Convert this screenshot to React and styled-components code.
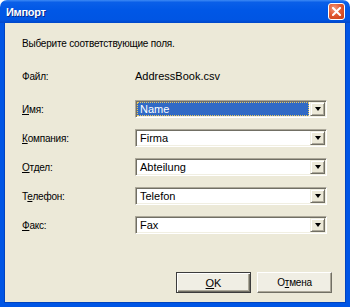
import React from 'react';
import styled, { createGlobalStyle } from 'styled-components';

const Global = createGlobalStyle`
  html, body { margin: 0; padding: 0; background: #ffffff; }
  body { font-family: "Liberation Sans", Arial, sans-serif; font-size: 11px; color: #000; }
  * { box-sizing: border-box; }
`;

const Window = styled.div`
  width: 350px;
  height: 307px;
  display: flex;
  flex-direction: column;
`;

const TitleBar = styled.div`
  height: 23px;
  flex: none;
  display: flex;
  align-items: center;
  justify-content: space-between;
  padding: 0 5px 0 6px;
  border-radius: 7px 7px 0 0;
  background: linear-gradient(to bottom, #3d8af5 0%, #0a5fe8 10%, #0057e6 45%, #0055e3 85%, #0046c8 100%);
`;

const Title = styled.span`
  color: #fff;
  font-weight: bold;
  font-size: 11px;
  letter-spacing: -0.3px;
  text-shadow: 1px 1px 0 #0a2a8a;
`;

const CloseButton = styled.div`
  width: 17px;
  height: 17px;
  border: 1px solid #fff;
  border-radius: 3px;
  background: radial-gradient(circle at 35% 30%, #f29a7c 0%, #e25a33 45%, #c53d14 100%);
  display: flex;
  align-items: center;
  justify-content: center;
`;

const Client = styled.div`
  flex: 1;
  display: flex;
  flex-direction: column;
  background: #ece9d8;
  border: 4px solid #0055e5;
  border-top: 0;
  box-shadow: inset 1px 0 0 #0043c0, inset -1px 0 0 #0043c0, inset 0 -1px 0 #0043c0;
  padding: 14px 14px 10px 18px;
`;

const Cyr = styled.span`
  font-size: 10px;
  letter-spacing: -0.2px;
`;

const Intro = styled.div`
  line-height: 13px;
  height: 13px;
  margin-bottom: 17px;
`;

const Form = styled.div`
  display: flex;
  flex-direction: column;
  gap: 11px;
`;

const Row = styled.div`
  display: flex;
  align-items: center;
  height: 18px;
  margin-bottom: ${p => (p.$spaced ? '4px' : '0')};
`;

const Label = styled.span`
  width: 113px;
  flex: none;
`;

const Combo = styled.div`
  width: 192px;
  height: 18px;
  display: flex;
  align-items: center;
  background: #fff;
  border: 1px solid;
  border-color: #aca899 #ffffff #ffffff #aca899;
  box-shadow: inset 1px 1px 0 #716f64, inset -1px -1px 0 #f1efe2;
  padding: 1px;
`;

const Value = styled.div`
  flex: 1;
  height: 14px;
  margin-right: 1px;
  padding-left: 2px;
  line-height: 12px;
  background: ${p => (p.$selected ? '#316ac5' : 'transparent')};
  color: ${p => (p.$selected ? '#fff' : '#000')};
  border: 1px ${p => (p.$selected ? 'dotted #e8c860' : 'solid transparent')};
`;

const DropButton = styled.div`
  width: 15px;
  height: 14px;
  flex: none;
  background: #ece9d8;
  border: 1px solid;
  border-color: #f1efe2 #716f64 #716f64 #f1efe2;
  box-shadow: inset 1px 1px 0 #fff, inset -1px -1px 0 #aca899;
  display: flex;
  align-items: center;
  justify-content: center;
  &::after {
    content: '';
    border-left: 3.5px solid transparent;
    border-right: 3.5px solid transparent;
    border-top: 4px solid #000;
  }
`;

const Footer = styled.div`
  margin-top: auto;
  display: flex;
  justify-content: flex-end;
  gap: 6px;
`;

const Button = styled.div`
  width: 75px;
  height: 21px;
  display: flex;
  align-items: center;
  justify-content: center;
  background: #f0eee4;
  border: 1px solid;
  border-color: ${p => (p.$default ? '#3c3c3c' : '#ffffff #716f64 #716f64 #ffffff')};
  box-shadow: ${p => (p.$default
    ? 'inset 1px 1px 0 #fff, inset -1px -1px 0 #716f64, inset -2px -2px 0 #aca899'
    : 'inset -1px -1px 0 #aca899')};
`;

const fields = [
  { key: 'И', rest: 'мя:', value: 'Name', selected: true },
  { key: 'К', rest: 'омпания:', value: 'Firma' },
  { key: 'О', rest: 'тдел:', value: 'Abteilung' },
  { pre: 'Т', key: 'е', rest: 'лефон:', value: 'Telefon' },
  { key: 'Ф', rest: 'акс:', value: 'Fax' },
];

export default function App() {
  return (
    <>
      <Global />
      <Window>
        <TitleBar>
          <Title>Импорт</Title>
          <CloseButton>
            <svg width="9" height="9" viewBox="0 0 9 9">
              <path d="M1 1 L8 8 M8 1 L1 8" stroke="#fff" strokeWidth="2" strokeLinecap="square" />
            </svg>
          </CloseButton>
        </TitleBar>
        <Client>
          <Intro><Cyr>Выберите соответствующие поля.</Cyr></Intro>
          <Form>
            <Row $spaced>
              <Label><Cyr>Файл:</Cyr></Label>
              <span>AddressBook.csv</span>
            </Row>
            {fields.map(f => (
              <Row key={f.value}>
                <Label><Cyr>{f.pre}<u>{f.key}</u>{f.rest}</Cyr></Label>
                <Combo>
                  <Value $selected={f.selected}>{f.value}</Value>
                  <DropButton />
                </Combo>
              </Row>
            ))}
          </Form>
          <Footer>
            <Button $default><span><u>O</u>K</span></Button>
            <Button><Cyr>О<u>т</u>мена</Cyr></Button>
          </Footer>
        </Client>
      </Window>
    </>
  );
}
